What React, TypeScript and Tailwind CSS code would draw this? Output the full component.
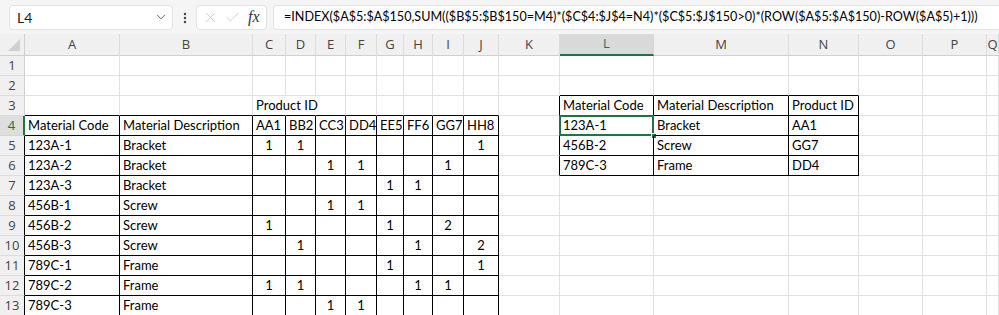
import { ChevronDown, X, Check } from "lucide-react";

const COLS = ["A", "B", "C", "D", "E", "F", "G", "H", "I", "J", "K", "L", "M", "N", "O", "P", "Q"];

// sheet content keyed by "row:col"
const cells: Record<string, string> = {
  "3:C": "Product ID",
  "4:A": "Material Code",
  "4:B": "Material Description",
  "4:C": "AA1",
  "4:D": "BB2",
  "4:E": "CC3",
  "4:F": "DD4",
  "4:G": "EE5",
  "4:H": "FF6",
  "4:I": "GG7",
  "4:J": "HH8",
  "3:L": "Material Code",
  "3:M": "Material Description",
  "3:N": "Product ID",
  "4:L": "123A-1",
  "4:M": "Bracket",
  "4:N": "AA1",
  "5:L": "456B-2",
  "5:M": "Screw",
  "5:N": "GG7",
  "6:L": "789C-3",
  "6:M": "Frame",
  "6:N": "DD4",
};

const materials: [string, string, Partial<Record<string, string>>][] = [
  ["123A-1", "Bracket", { C: "1", D: "1", J: "1" }],
  ["123A-2", "Bracket", { E: "1", F: "1", I: "1" }],
  ["123A-3", "Bracket", { G: "1", H: "1" }],
  ["456B-1", "Screw", { E: "1", F: "1" }],
  ["456B-2", "Screw", { C: "1", G: "1", I: "2" }],
  ["456B-3", "Screw", { D: "1", H: "1", J: "2" }],
  ["789C-1", "Frame", { G: "1", J: "1" }],
  ["789C-2", "Frame", { C: "1", D: "1", H: "1", I: "1" }],
  ["789C-3", "Frame", { E: "1", F: "1" }],
];

materials.forEach(([code, desc, marks], i) => {
  const r = i + 5;
  cells[`${r}:A`] = code;
  cells[`${r}:B`] = desc;
  Object.entries(marks).forEach(([c, v]) => {
    cells[`${r}:${c}`] = v as string;
  });
});

const inTable = (r: number, c: number) => {
  if (c < 0) return false;
  if (r >= 4 && r <= 13 && c <= 9) return true;
  if (r >= 3 && r <= 6 && c >= 11 && c <= 13) return true;
  return false;
};

const FORMULA =
  "=INDEX($A$5:$A$150,SUM(($B$5:$B$150=M4)*($C$4:$J$4=N4)*($C$5:$J$150>0)*(ROW($A$5:$A$150)-ROW($A$5)+1)))";

function Toolbar() {
  return (
    <div className="flex h-[34px] items-center bg-[#f5f5f5] pl-[9px]">
      <div className="flex h-[25px] w-[164px] items-center justify-between rounded-[4px] border border-[#e3e3e3] bg-white pl-[7px] pr-[4px] text-[14px] text-[#222]">
        <span>L4</span>
        <ChevronDown size={14} strokeWidth={1.5} className="text-[#555]" />
      </div>
      <svg width="22" height="25" viewBox="0 0 22 25" className="ml-px">
        <circle cx="11" cy="9" r="1.2" fill="#444" />
        <circle cx="11" cy="13" r="1.2" fill="#444" />
        <circle cx="11" cy="17" r="1.2" fill="#444" />
      </svg>
      <div className="flex h-[25px] w-[71px] items-center gap-[5px] rounded-[4px] border border-[#e3e3e3] bg-white pl-[5px]">
        <X size={17} strokeWidth={1} className="text-[#bdbdbd]" />
        <Check size={17} strokeWidth={1} className="text-[#bdbdbd]" />
        <span className="ml-[2px] font-['Liberation_Serif',serif] text-[16px] italic text-[#333]">fx</span>
      </div>
      <div className="ml-[6px] flex h-[25px] flex-1 items-center overflow-hidden whitespace-nowrap rounded-l-[4px] border border-r-0 border-[#e3e3e3] bg-white pl-[10px] text-[12.6px] text-black">
        {FORMULA}
      </div>
    </div>
  );
}

function Corner() {
  return (
    <div className="relative h-[22px] border-b border-r border-[#d0d0d0] bg-[#f0f0f0]">
      <svg width="14" height="14" viewBox="0 0 14 14" className="absolute bottom-[3px] right-[3px]">
        <polygon points="13,1 13,13 1,13" fill="#d0d0d0" />
      </svg>
    </div>
  );
}

function ColHeader({ name }: { name: string }) {
  const sel = name === "L";
  return (
    <div
      className={
        sel
          ? "flex h-[22px] items-center justify-center border-b-2 border-r border-b-[#217346] border-r-[#d6d6d6] bg-[#d9d9d9] text-[13px] text-[#217346]"
          : "flex h-[22px] items-center justify-center border-b border-r border-b-[#d0d0d0] border-r-[#dcdcdc] bg-[#f0f0f0] text-[13px] text-[#444]"
      }
    >
      {name}
    </div>
  );
}

function RowHeader({ r }: { r: number }) {
  if (r === 4) {
    return (
      <div className="flex h-[20px] items-center justify-center border-b border-r-2 border-b-[#d6d6d6] border-r-[#217346] bg-[#dedede] text-[13px] text-[#217346]">
        {r}
      </div>
    );
  }
  return (
    <div
      className={
        r >= 5
          ? "flex h-[20px] items-center justify-center border-b border-r border-b-[#dcdcdc] border-r-black bg-[#f0f0f0] text-[13px] text-[#444]"
          : "flex h-[20px] items-center justify-center border-b border-r border-b-[#dcdcdc] border-r-[#d0d0d0] bg-[#f0f0f0] text-[13px] text-[#444]"
      }
    >
      {r}
    </div>
  );
}

function Cell({ r, c }: { r: number; c: number }) {
  const col = COLS[c];
  const value = cells[`${r}:${col}`];
  const blackRight = inTable(r, c) || inTable(r, c + 1);
  const blackBottom = inTable(r, c) || inTable(r + 1, c);
  // "Product ID" spills over D3 and E3, so no gridline under it
  const hideRight = r === 3 && (col === "C" || col === "D");
  const numeric = value !== undefined && /^\d$/.test(value);
  const selected = r === 4 && col === "L";

  return (
    <div
      className={[
        "relative flex h-[20px] items-center overflow-visible whitespace-nowrap border-b border-r text-[13px] leading-none text-black",
        blackRight ? "border-r-black" : hideRight ? "border-r-transparent" : "border-r-[#e1e1e1]",
        blackBottom ? "border-b-black" : "border-b-[#e1e1e1]",
        numeric ? "justify-center" : "pl-[3px]",
      ].join(" ")}
    >
      {value}
      {selected && (
        <>
          <div className="absolute -left-[1px] -top-[1px] bottom-[-1px] right-[-1px] border-2 border-[#217346]" />
          <div className="absolute -bottom-[4px] -right-[4px] h-[6px] w-[6px] border border-white bg-[#217346]" />
        </>
      )}
    </div>
  );
}

export default function App() {
  const rows = Array.from({ length: 13 }, (_, i) => i + 1);
  return (
    <div className="h-[315px] w-[999px] overflow-hidden bg-white font-['Lato',sans-serif]">
      <Toolbar />
      <div className="grid grid-cols-[25px_95px_133px_33px_30px_30px_31px_27px_29px_31px_35px_61px_94px_135px_70px_64px_64px_1fr] font-['Open_Sans',sans-serif]">
        <Corner />
        {COLS.map((c) => (
          <ColHeader key={c} name={c} />
        ))}
        {rows.map((r) => (
          <div key={r} className="contents">
            <RowHeader r={r} />
            {COLS.map((_, ci) => (
              <div key={ci} className="contents font-['Lato',sans-serif]">
                <Cell r={r} c={ci} />
              </div>
            ))}
          </div>
        ))}
      </div>
    </div>
  );
}
